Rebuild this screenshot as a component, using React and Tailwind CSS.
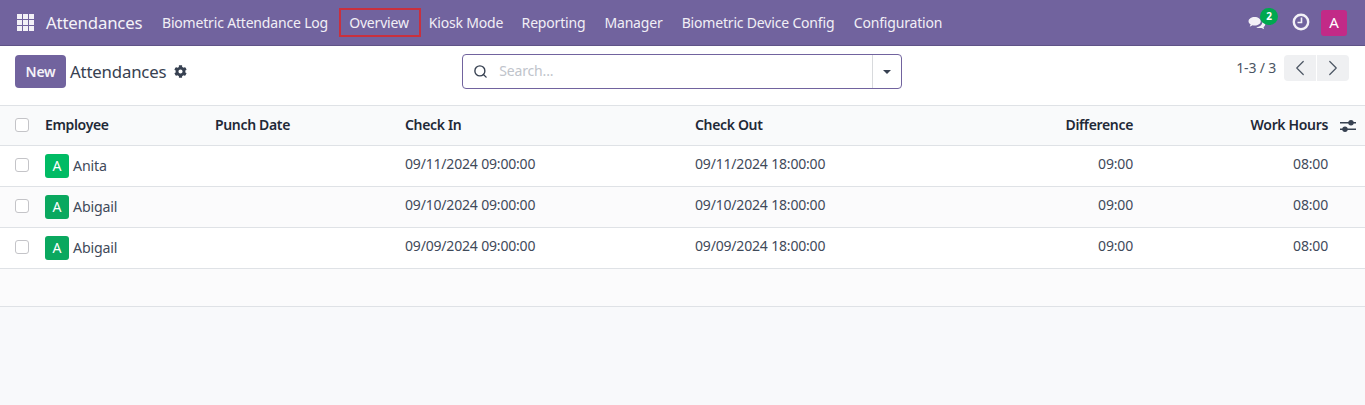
import { ChevronLeft, ChevronRight, Search } from "lucide-react";
import { FaCog } from "react-icons/fa";

const menus = [
  { label: "Biometric Attendance Log", cls: "w-[190px]" },
  { label: "Overview", cls: "w-[80px] pr-[2px] outline outline-2 -outline-offset-1 outline-[#c9303e]" },
  { label: "Kiosk Mode", cls: "w-[92px]" },
  { label: "Reporting", cls: "w-[83px]" },
  { label: "Manager", cls: "w-[77px]" },
  { label: "Biometric Device Config", cls: "w-[172px]" },
  { label: "Configuration", cls: "w-[108px]" },
];

const rows = [
  { name: "Anita", date: "09/11/2024", color: "bg-[#00bb64]", bg: "bg-white" },
  { name: "Abigail", date: "09/10/2024", color: "bg-[#0aa85f]", bg: "bg-[#fbfbfc]" },
  { name: "Abigail", date: "09/09/2024", color: "bg-[#0aa85f]", bg: "bg-white" },
];

const Checkbox = () => (
  <div className="w-[14px] h-[14px] mb-[2px] rounded-[3px] border border-[#c4c4c8] bg-white shrink-0" />
);

const App = () => {
  return (
    <div className="h-[405px] w-full overflow-hidden bg-[#f8f9fb] font-['Noto_Sans',sans-serif] text-[14px] tracking-[-0.18px] text-[#3f4a5a]">
      <nav className="flex items-center h-[46px] bg-[#71639e] border-b border-[#5f5387] text-white pl-[17px] pr-[18px]">
        <svg width="17" height="17" viewBox="0 0 17 17" fill="#f3f1f7" className="shrink-0">
          <rect x="0" y="0" width="5" height="5" />
          <rect x="6" y="0" width="5" height="5" />
          <rect x="12" y="0" width="5" height="5" />
          <rect x="0" y="6" width="5" height="5" />
          <rect x="6" y="6" width="5" height="5" />
          <rect x="12" y="6" width="5" height="5" />
          <rect x="0" y="12" width="5" height="5" />
          <rect x="6" y="12" width="5" height="5" />
          <rect x="12" y="12" width="5" height="5" />
        </svg>
        <span className="ml-[12px] w-[108px] text-[16.8px] text-[#f4f2f8]">Attendances</span>
        <div className="flex items-center -ml-[4px]">
          {menus.map((m) => (
            <div key={m.label} className={`h-[27px] flex items-center justify-center whitespace-nowrap text-[#f1eff6] ${m.cls}`}>
              {m.label}
            </div>
          ))}
        </div>
        <div className="ml-auto flex items-center">
          <div className="relative w-[18px] h-[17px] flex items-center">
            <svg width="18" height="16" viewBox="0 0 19 17" fill="#f3f1f7">
              <path d="M7 2c3.600 0 6.500 2 6.500 4.600S10.600 11.200 7 11.200c-.8 0-1.500-.1-2.200-.3L1.800 12.500l.9-2.700C1.300 9 .5 7.900.5 6.600.5 4 3.400 2 7 2z" />
              <path d="M14.800 6.200c2 .6 3.500 2 3.500 3.700 0 1.200-.7 2.200-1.900 3l.7 2.300-2.800-1.500c-.6.1-1.200.2-1.800.2-1.500 0-2.800-.4-3.800-1 3.600-.1 6.300-2.200 6.300-5 0-.3-.1-.5-.2-.7z" />
            </svg>
            <span className="absolute -top-[6px] left-[12px] w-[18px] h-[17px] rounded-full bg-[#00a84f] text-[10px] font-bold text-white flex items-center justify-center">
              2
            </span>
          </div>
          <svg width="18" height="18" viewBox="0 0 18 18" fill="none" stroke="#f3f1f7" className="ml-[26px] -mt-[1px]">
            <circle cx="9" cy="9" r="7.2" strokeWidth="2.4" />
            <path d="M9.500 4.500v5H5.500" strokeWidth="1.600" />
          </svg>
          <div className="ml-[11px] w-[26px] h-[26px] rounded-[3px] bg-[#c22a87] text-white text-[15px] flex items-center justify-center">
            A
          </div>
        </div>
      </nav>

      <div className="flex items-start h-[60px] bg-white border-b border-[#dfe2e6] pl-[15px] pr-[16px] pt-[9px]">
        <button className="w-[51px] h-[33px] rounded-[4px] bg-[#71639e] text-[#f4f2f8] font-semibold">New</button>
        <span className="ml-[4px] mt-[4px] text-[16.8px] text-[#374151]">Attendances</span>
        <FaCog size={13} className="ml-[8px] mt-[10px] text-[#374151]" />
        <div className="ml-[275px] flex w-[440px] h-[35px] -mt-[1px] rounded-[4px] border border-[#71639e] bg-white">
          <div className="flex flex-1 items-center pl-[10px] pb-[2px]">
            <Search size={15} strokeWidth={2.2} className="text-[#374151] mt-[2px]" />
            <span className="ml-[11px] text-[#c0c4cb]">Search...</span>
          </div>
          <div className="w-[29px] border-l border-[#d8dadd] flex items-center justify-center">
            <div className="w-0 h-0 border-x-[4px] border-x-transparent border-t-[4px] border-t-[#374151]" />
          </div>
        </div>
        <div className="ml-auto flex items-start">
          <span className="mt-[2px] text-[#4b5563]">1-3 / 3</span>
          <div className="ml-[8px] flex gap-px">
            <div className="w-[32px] h-[26px] rounded-l-[4px] bg-[#eff0f2] flex items-center justify-center">
              <ChevronLeft size={26} strokeWidth={1.1} className="text-[#4b5563]" />
            </div>
            <div className="w-[32px] h-[26px] rounded-r-[4px] bg-[#eff0f2] flex items-center justify-center">
              <ChevronRight size={26} strokeWidth={1.1} className="text-[#4b5563]" />
            </div>
          </div>
        </div>
      </div>

      <div className="flex items-center h-[40px] bg-[#f9fafb] border-b border-[#dfe2e6] pl-[15px] font-semibold tracking-[-0.34px] text-[#1f2937]">
        <Checkbox />
        <div className="ml-[16px] w-[170px] pb-[2px]">Employee</div>
        <div className="w-[190px] pb-[2px]">Punch Date</div>
        <div className="w-[290px] pb-[2px]">Check In</div>
        <div className="w-[200px] pb-[2px]">Check Out</div>
        <div className="w-[238px] pb-[2px] text-right">Difference</div>
        <div className="w-[195px] pb-[2px] text-right">Work Hours</div>
        <svg width="16" height="14" viewBox="0 0 16 14" className="ml-[12px]" fill="#374151">
          <rect x="0" y="3" width="16" height="1.500" />
          <rect x="0" y="9.500" width="16" height="1.500" />
          <circle cx="11" cy="3.700" r="2.700" />
          <circle cx="5" cy="10.200" r="2.700" />
        </svg>
      </div>

      {rows.map((r) => (
        <div key={r.date} className={`flex items-center h-[41px] border-b border-[#dfe2e6] pl-[15px] ${r.bg}`}>
          <Checkbox />
          <div className="ml-[16px] w-[170px] flex items-center gap-[4px]">
            <div className={`w-[24px] h-[24px] pb-px rounded-[3px] text-white flex items-center justify-center ${r.color}`}>A</div>
            <span className="text-[14.2px]">{r.name}</span>
          </div>
          <div className="w-[190px]" />
          <div className="w-[290px] pb-[6px]">{r.date} 09:00:00</div>
          <div className="w-[200px] pb-[6px]">{r.date} 18:00:00</div>
          <div className="w-[238px] pb-[6px] text-right">09:00</div>
          <div className="w-[195px] pb-[6px] text-right">08:00</div>
        </div>
      ))}

      <div className="h-[38px] bg-[#fbfbfc] border-b border-[#dfe2e6]" />
    </div>
  );
};

export default App;
